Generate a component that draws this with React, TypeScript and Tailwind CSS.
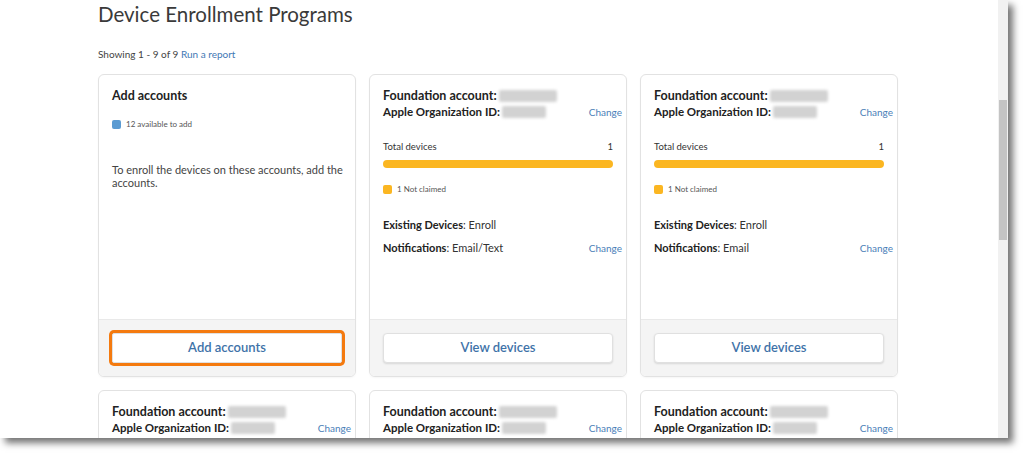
import React from 'react'

const font = { fontFamily: 'Lato, "Open Sans", Arial, sans-serif' }

function Redacted({ w }: { w: number }) {
  return (
    <span
      className="ml-[2px] inline-block h-[12px] rounded-[2px] bg-[#d2d2d2] align-middle blur-[1.5px]"
      style={{ width: w }}
    />
  )
}

function Legend({ color, label }: { color: string; label: string }) {
  return (
    <div className="flex items-center gap-[5px] text-[8px] leading-[10px] text-[#555]">
      <span className={`h-[9px] w-[9px] rounded-[2px] ${color}`} />
      {label}
    </div>
  )
}

function CardShell({ children, footer }: { children: React.ReactNode; footer?: React.ReactNode }) {
  return (
    <div className="flex h-[303px] flex-col overflow-hidden rounded-[6px] border border-[#e2e2e2] bg-white shadow-[0_1px_2px_rgba(0,0,0,0.04)]">
      <div className="flex-1 px-[13px] pt-[13px]">{children}</div>
      {footer && <div className="border-t border-[#e9e9e9] bg-[#f4f4f4] p-[13px]">{footer}</div>}
    </div>
  )
}

function FooterButton({ label, highlight }: { label: string; highlight?: boolean }) {
  return (
    <button
      type="button"
      className={
        'flex h-[30px] w-full items-center justify-center border bg-white text-[13px] font-semibold text-[#3e72a8] shadow-[0_1px_2px_rgba(0,0,0,0.12)] ' +
        (highlight ? 'rounded-[2px] border-[#e0e0e0] ring-[3px] ring-[#f47a0f]' : 'rounded-[4px] border-[#e0e0e0]')
      }
    >
      {label}
    </button>
  )
}

function AccountHeader({ fw, aw }: { fw: number; aw: number }) {
  return (
    <>
      <div className="flex items-center text-[12.5px] font-bold leading-4 text-[#222]">
        Foundation account:
        <Redacted w={fw} />
      </div>
      <div className="mr-[-9px] flex items-center justify-between leading-4">
        <div className="flex items-center text-[11.5px] font-bold text-[#222]">
          Apple Organization ID:
          <Redacted w={aw} />
        </div>
        <a className="text-[10px] text-[#4a80b8]">Change</a>
      </div>
    </>
  )
}

function AccountCard({ notifications }: { notifications: string }) {
  return (
    <CardShell footer={<FooterButton label="View devices" />}>
      <AccountHeader fw={58} aw={44} />
      <div className="mt-[21px] flex justify-between text-[9.5px] leading-[12px] text-[#333]">
        <span>Total devices</span>
        <span>1</span>
      </div>
      <div className="mt-[7px] h-[8px] rounded-full bg-[#fbb621]" />
      <div className="mt-[16px]">
        <Legend color="bg-[#fbb621]" label="1 Not claimed" />
      </div>
      <div className="mt-[23px] text-[11px] leading-4 text-[#333]">
        <span className="font-bold text-[#222]">Existing Devices</span>: Enroll
      </div>
      <div className="mr-[-9px] mt-[7px] flex items-center justify-between text-[11px] leading-4 text-[#333]">
        <span>
          <span className="font-bold text-[#222]">Notifications</span>: {notifications}
        </span>
        <a className="text-[10px] text-[#4a80b8]">Change</a>
      </div>
    </CardShell>
  )
}

function AddAccountsCard() {
  return (
    <CardShell footer={<FooterButton label="Add accounts" highlight />}>
      <div className="text-[12.5px] font-bold leading-4 text-[#222]">Add accounts</div>
      <div className="mt-[15px]">
        <Legend color="bg-[#5b9bd2]" label="12 available to add" />
      </div>
      <p className="mr-[-8px] mt-[34px] text-[11px] leading-[13px] text-[#444]">
        To enroll the devices on these accounts, add the accounts.
      </p>
    </CardShell>
  )
}

export default function App() {
  return (
    <div className="h-[455px] w-[1024px] overflow-hidden bg-white" style={font}>
      <div className="flex h-[438px] w-[1008px] bg-white shadow-[5px_5px_7px_rgba(0,0,0,0.55)]">
        <main className="flex-1 overflow-hidden pl-[98px]">
          <h1 className="text-[20.5px] leading-7 text-[#3a3a3a]">Device Enrollment Programs</h1>
          <div className="mt-[19px] text-[10px] leading-[14px] text-[#444]">
            Showing 1 - 9 of 9 <a className="text-[#3f78b4]">Run a report</a>
          </div>
          <div className="mt-[13px] grid grid-cols-[258px_258px_258px] gap-[13px]">
            <AddAccountsCard />
            <AccountCard notifications="Email/Text" />
            <AccountCard notifications="Email" />
            {[0, 1, 2].map((i) => (
              <div key={i} className="h-[80px] rounded-[6px] border border-[#e2e2e2] bg-white px-[13px] pt-[13px]">
                <AccountHeader fw={58} aw={44} />
              </div>
            ))}
          </div>
        </main>
        <div className="flex w-[10px] flex-col bg-[#f1f1f1]">
          <div className="mx-[1px] mt-[100px] h-[140px] bg-[#c4c4c4]" />
        </div>
      </div>
    </div>
  )
}
